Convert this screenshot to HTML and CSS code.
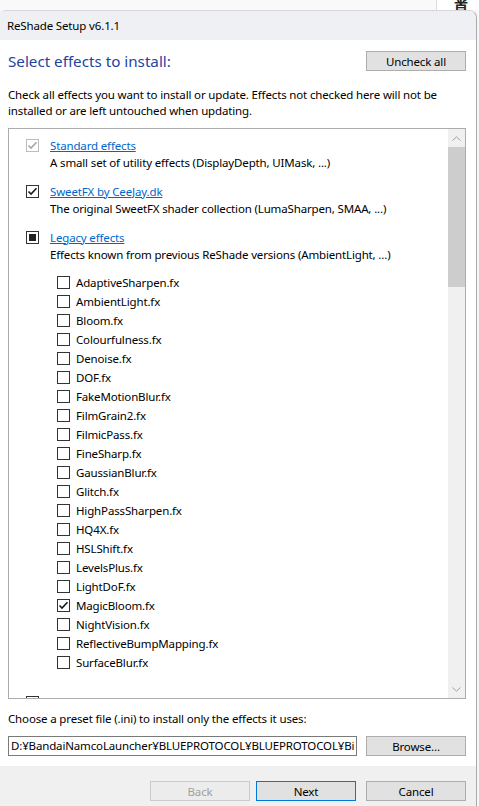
FILE: index.html
```html
<!DOCTYPE html>
<html>
<head>
<meta charset="utf-8">
<link rel="stylesheet" href="styles.css">
</head>
<body>
<div class="desk-top">
  <div class="dt-left"></div>
  <div class="dt-line"></div>
  <div class="dt-text">下首</div>
</div>
<div class="window">
  <div class="titlebar">ReShade Setup v6.1.1</div>
  <div class="content">
    <div class="head-row">
      <h1 class="heading">Select effects to install:</h1>
      <button class="btn">Uncheck all</button>
    </div>
    <p class="intro">Check all effects you want to install or update. Effects not checked here will not be<br>installed or are left untouched when updating.</p>
    <div class="listbox">
      <div class="list">
        <div class="item">
          <div class="item-title">
            <span class="cb cb-disabled"><svg viewBox="0 0 11 11" width="11" height="11"><polyline points="1.5,5.5 4,8 9.5,2.2" fill="none" stroke="#a6a6a6" stroke-width="1.6"/></svg></span>
            <a class="link">Standard effects</a>
          </div>
          <div class="desc">A small set of utility effects (DisplayDepth, UIMask, ...)</div>
        </div>
        <div class="item">
          <div class="item-title">
            <span class="cb"><svg viewBox="0 0 11 11" width="11" height="11"><polyline points="1.5,5.5 4,8 9.5,2.2" fill="none" stroke="#1a1a1a" stroke-width="1.6"/></svg></span>
            <a class="link">SweetFX by CeeJay.dk</a>
          </div>
          <div class="desc">The original SweetFX shader collection (LumaSharpen, SMAA, ...)</div>
        </div>
        <div class="item">
          <div class="item-title">
            <span class="cb"><span class="cb-fill"></span></span>
            <a class="link">Legacy effects</a>
          </div>
          <div class="desc">Effects known from previous ReShade versions (AmbientLight, ...)</div>
          <div class="subs">
            <div class="sub"><span class="cb"></span>AdaptiveSharpen.fx</div>
            <div class="sub"><span class="cb"></span>AmbientLight.fx</div>
            <div class="sub"><span class="cb"></span>Bloom.fx</div>
            <div class="sub"><span class="cb"></span>Colourfulness.fx</div>
            <div class="sub"><span class="cb"></span>Denoise.fx</div>
            <div class="sub"><span class="cb"></span>DOF.fx</div>
            <div class="sub"><span class="cb"></span>FakeMotionBlur.fx</div>
            <div class="sub"><span class="cb"></span>FilmGrain2.fx</div>
            <div class="sub"><span class="cb"></span>FilmicPass.fx</div>
            <div class="sub"><span class="cb"></span>FineSharp.fx</div>
            <div class="sub"><span class="cb"></span>GaussianBlur.fx</div>
            <div class="sub"><span class="cb"></span>Glitch.fx</div>
            <div class="sub"><span class="cb"></span>HighPassSharpen.fx</div>
            <div class="sub"><span class="cb"></span>HQ4X.fx</div>
            <div class="sub"><span class="cb"></span>HSLShift.fx</div>
            <div class="sub"><span class="cb"></span>LevelsPlus.fx</div>
            <div class="sub"><span class="cb"></span>LightDoF.fx</div>
            <div class="sub"><span class="cb"><svg viewBox="0 0 11 11" width="11" height="11"><polyline points="1.5,5.5 4,8 9.5,2.2" fill="none" stroke="#1a1a1a" stroke-width="1.6"/></svg></span>MagicBloom.fx</div>
            <div class="sub"><span class="cb"></span>NightVision.fx</div>
            <div class="sub"><span class="cb"></span>ReflectiveBumpMapping.fx</div>
            <div class="sub"><span class="cb"></span>SurfaceBlur.fx</div>
          </div>
        </div>
        <div class="item">
          <div class="item-title">
            <span class="cb"></span>
            <a class="link link-faded">Depth3D by BlueSkyDefender</a>
          </div>
        </div>
      </div>
      <div class="scrollbar">
        <div class="sb-btn"><svg viewBox="0 0 9 5" width="9" height="5"><polyline points="0.5,4.5 4.5,0.8 8.5,4.5" fill="none" stroke="#a3a3a3" stroke-width="1"/></svg></div>
        <div class="sb-thumb"></div>
        <div class="sb-track"></div>
        <div class="sb-btn"><svg viewBox="0 0 9 5" width="9" height="5"><polyline points="0.5,0.5 4.5,4.2 8.5,0.5" fill="none" stroke="#a3a3a3" stroke-width="1"/></svg></div>
      </div>
    </div>
    <div class="preset-label">Choose a preset file (.ini) to install only the effects it uses:</div>
    <div class="preset-row">
      <div class="path">D:¥BandaiNamcoLauncher¥BLUEPROTOCOL¥BLUEPROTOCOL¥Bi</div>
      <button class="btn">Browse...</button>
    </div>
  </div>
  <div class="footer">
    <button class="btn btn-disabled">Back</button>
    <button class="btn btn-default">Next</button>
    <button class="btn btn-cancel">Cancel</button>
  </div>
</div>
</body>
</html>
```
FILE: styles.css
```css
html, body {
  margin: 0;
  padding: 0;
}
body {
  background: #f7f7f7;
  font-family: "Noto Sans", "Open Sans", sans-serif;
  font-size: 11.5px;
  letter-spacing: -0.15px;
  color: #000;
  width: 479px;
  height: 806px;
  overflow: hidden;
}
.desk-top {
  height: 10px;
  display: flex;
  overflow: hidden;
}
.dt-left {
  width: 436px;
  background: #f9f9f9;
}
.dt-line {
  width: 1px;
  background: #dcdcdc;
}
.dt-text {
  flex: 1;
  background: #fff;
  padding-left: 17px;
  font-family: "Noto Sans CJK JP", sans-serif;
  font-size: 14px;
  line-height: 8px;
  display: flex;
  align-items: flex-end;
  font-weight: bold;
  color: #222;
}
.window {
  width: 477px;
  box-sizing: border-box;
  border-right: 1px solid #a9a9a9;
  border-top: 1px solid #d6d6d6;
  border-top-right-radius: 8px;
  border-top-left-radius: 6px;
  overflow: hidden;
  background: #fff;
  height: 796px;
  display: flex;
  flex-direction: column;
}
.titlebar {
  height: 29px;
  flex: none;
  background: #eff0f4;
  padding-left: 7px;
  line-height: 29px;
  font-size: 11.5px;
}
.content {
  flex: 1;
  padding: 11px 10px 0 8px;
  background: #fff;
}
.head-row {
  display: flex;
  align-items: center;
  justify-content: space-between;
  height: 20px;
}
.heading {
  margin: 0;
  font-weight: normal;
  font-size: 15.2px;
  letter-spacing: 0;
  color: #1d44a0;
  line-height: 20px;
}
.btn {
  width: 100px;
  height: 20px;
  box-sizing: border-box;
  background: #e1e1e1;
  border: 1px solid #adadad;
  font-family: "Noto Sans", "Open Sans", sans-serif;
  font-size: 11.5px;
  letter-spacing: -0.15px;
  color: #000;
  padding: 0;
  line-height: 17px;
  margin: 0;
}
.intro {
  margin: 16px 0 0 0;
  line-height: 16px;
  white-space: nowrap;
}
.listbox {
  margin-top: 9px;
  height: 571px;
  box-sizing: border-box;
  border: 1px solid #acacac;
  display: flex;
  overflow: hidden;
}
.list {
  flex: 1;
  overflow: hidden;
  padding: 7px 0 0 17px;
}
.item {
  margin-bottom: 10px;
}
.item-title {
  display: flex;
  align-items: center;
  height: 18px;
}
.link {
  color: #0066cc;
  text-decoration: underline;
  margin-left: 11px;
}
.link-faded {
  color: #a9c8ea;
}
.cb {
  width: 13px;
  height: 13px;
  box-sizing: border-box;
  border: 1px solid #333;
  background: #fff;
  display: inline-flex;
  align-items: center;
  justify-content: center;
  flex: none;
}
.cb-disabled {
  border-color: #bcbcbc;
}
.cb-fill {
  width: 7px;
  height: 7px;
  background: #222;
}
.desc {
  line-height: 18px;
  padding-left: 24px;
}
.subs {
  margin-top: 9px;
  margin-bottom: 21px;
  padding-left: 31px;
}
.sub {
  height: 19px;
  display: flex;
  align-items: center;
}
.sub .cb {
  margin-right: 6px;
}
.scrollbar {
  width: 17px;
  background: #f0f0f0;
  display: flex;
  flex-direction: column;
}
.sb-btn {
  height: 18px;
  display: flex;
  align-items: center;
  justify-content: center;
}
.sb-thumb {
  height: 140px;
  background: #cdcdcd;
}
.sb-track {
  flex: 1;
}
.preset-label {
  margin-top: 12px;
  line-height: 16px;
}
.preset-row {
  margin-top: 9px;
  display: flex;
  justify-content: space-between;
  align-items: center;
}
.path {
  width: 349px;
  height: 20px;
  box-sizing: border-box;
  border: 1px solid #7a7a7a;
  padding-left: 2px;
  line-height: 18px;
  white-space: nowrap;
  overflow: hidden;
}
.footer {
  flex: none;
  background: #f0f0f0;
  height: 40px;
  padding: 15px 10px 0 0;
  box-sizing: border-box;
  display: flex;
  justify-content: flex-end;
  align-items: flex-start;
}
.btn-disabled {
  background: #ececec;
  border-color: #cccccc;
  color: #a0a0a0;
}
.btn-default {
  border-color: #0078d7;
  margin-left: 6px;
}
.btn-cancel {
  margin-left: 10px;
}
```
